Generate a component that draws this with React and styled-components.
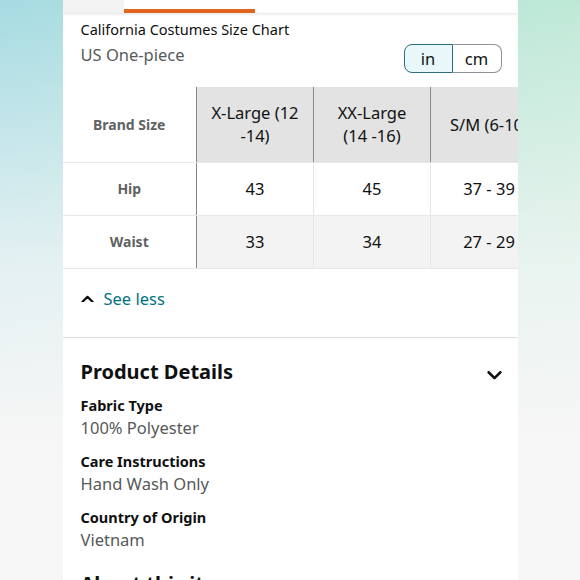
import React, { useState } from "react";
import styled, { createGlobalStyle } from "styled-components";

const GlobalStyle = createGlobalStyle`
  html, body {
    margin: 0;
    padding: 0;
    width: 580px;
    height: 580px;
    overflow: hidden;
  }
  body {
    font-family: "Noto Sans", "Open Sans", Arial, sans-serif;
    background:
      linear-gradient(to bottom, rgba(247,247,247,0) 0%, rgba(247,247,247,0.75) 45%, #f6f6f6 75%, #f7f7f7 100%),
      linear-gradient(to right, #a6dbe2 0%, #b3e2dd 50%, #bfe9d6 100%);
  }
`;

const Card = styled.div`
  width: 455px;
  height: 580px;
  margin: 0 auto;
  background: #fff;
  overflow: hidden;
`;

const Tabs = styled.div`
  display: flex;
  height: 13px;
  box-shadow: 0 1px 3px rgba(0, 0, 0, 0.12);
`;

const Tab = styled.div`
  width: ${({ w }) => w}px;
  background: ${({ grey }) => (grey ? "#f3f3f3" : "#fff")};
  border-bottom: ${({ active }) => (active ? "4px solid #e06620" : "none")};
  box-sizing: border-box;
  flex: ${({ w }) => (w ? "none" : "1")};
`;

const Header = styled.div`
  padding: 6px 16px 0 18px;
`;

const ChartTitle = styled.div`
  font-size: 14.5px;
  line-height: 20px;
  color: #0f1111;
`;

const SubRow = styled.div`
  display: flex;
  align-items: flex-start;
  justify-content: space-between;
`;

const SubTitle = styled.div`
  font-size: 16.5px;
  line-height: 24px;
  color: #565959;
  margin-top: 4px;
`;

const Toggle = styled.div`
  display: flex;
  margin-top: 5px;
  height: 29px;
`;

const ToggleBtn = styled.button`
  width: 49px;
  height: 29px;
  box-sizing: border-box;
  font-family: inherit;
  font-size: 16.5px;
  color: #0f1111;
  padding: 0;
  cursor: pointer;
  background: ${({ selected }) => (selected ? "#e8f8fa" : "#fff")};
  border: 1.5px solid ${({ selected }) => (selected ? "#2b6f7c" : "#8d9096")};
  border-radius: ${({ left }) => (left ? "8px 0 0 8px" : "0 8px 8px 0")};
  ${({ left }) => (left ? "" : "border-left: none;")}
`;

const TableWrap = styled.div`
  margin-top: 14px;
  overflow: hidden;
`;

const Table = styled.table`
  border-collapse: collapse;
  table-layout: fixed;
  width: 485px;
`;

const RowHead = styled.th`
  width: 134px;
  box-sizing: border-box;
  font-size: 14px;
  font-weight: 700;
  color: #5f6262;
  text-align: center;
  background: #fff;
  border-right: 1.5px solid #858585;
  border-bottom: 1px solid #e7e7e7;
  box-shadow: 5px 0 6px -3px rgba(0, 0, 0, 0.12);
  position: relative;
  z-index: 1;
  height: ${({ h }) => h}px;
  padding: 0;
`;

const ColHead = styled.th`
  width: 117px;
  box-sizing: border-box;
  height: 75px;
  background: #e3e3e3;
  font-weight: 400;
  font-size: 16.5px;
  line-height: 23px;
  color: #0f1111;
  text-align: center;
  white-space: nowrap;
  border-right: 1px solid #8a8a8a;
  border-bottom: 1px solid #e7e7e7;
  padding: 0 6px;
`;

const HeadLine = styled.span`
  display: block;
`;

const Cell = styled.td`
  height: 53px;
  box-sizing: border-box;
  text-align: center;
  font-size: 16.5px;
  color: #0f1111;
  white-space: nowrap;
  background: ${({ shade }) => (shade ? "#f3f3f3" : "#fff")};
  border-right: 1px solid #e7e7e7;
  border-bottom: 1px solid #e7e7e7;
  padding: 0;
`;

const SeeLess = styled.div`
  display: flex;
  align-items: center;
  gap: 10px;
  height: 69px;
  box-sizing: border-box;
  padding: 0 0 8px 18px;
  color: #007185;
  font-size: 16.5px;
  border-bottom: 1px solid #dddddd;
`;

const Details = styled.div`
  padding: 17px 16px 0 18px;
`;

const DetailsHead = styled.div`
  display: flex;
  justify-content: space-between;
  align-items: center;
  height: 34px;
`;

const DetailsTitle = styled.h2`
  margin: 0;
  font-size: 20px;
  line-height: 27px;
  font-weight: 700;
  color: #0f1111;
`;

const Item = styled.div`
  margin-top: ${({ first }) => (first ? "5px" : "10px")};
`;

const Label = styled.div`
  font-size: 14.5px;
  font-weight: 700;
  line-height: 22px;
  color: #0f1111;
`;

const Value = styled.div`
  font-size: 16.5px;
  line-height: 24px;
  color: #565959;
`;

const NextTitle = styled(DetailsTitle)`
  margin-top: 18px;
`;

const Chevron = ({ up, size = 14 }) => (
  <svg width={size} height={size * 0.6} viewBox="0 0 14 8.4" style={{ flex: "none", marginTop: up ? 0 : 8 }}>
    <polyline
      points={up ? "1.5,7.4 7,2 12.5,7.4" : "1.5,1.2 7,6.6 12.5,1.2"}
      fill="none"
      stroke="#0f1111"
      strokeWidth="2.4"
      strokeLinecap="round"
      strokeLinejoin="round"
    />
  </svg>
);

const sizes = [["X-Large (12", "-14)"], ["XX-Large", "(14 -16)"], ["S/M (6-10)"]];
const rows = [
  { name: "Hip", values: ["43", "45", "37 - 39"] },
  { name: "Waist", values: ["33", "34", "27 - 29"] },
];

const details = [
  { label: "Fabric Type", value: "100% Polyester" },
  { label: "Care Instructions", value: "Hand Wash Only" },
  { label: "Country of Origin", value: "Vietnam" },
];

const App = () => {
  const [unit, setUnit] = useState("in");
  return (
    <>
      <GlobalStyle />
      <Card>
        <Tabs>
          <Tab w={61} grey />
          <Tab w={131} active />
          <Tab />
        </Tabs>
        <Header>
          <ChartTitle>California Costumes Size Chart</ChartTitle>
          <SubRow>
            <SubTitle>US One-piece</SubTitle>
            <Toggle>
              <ToggleBtn left selected={unit === "in"} onClick={() => setUnit("in")}>
                in
              </ToggleBtn>
              <ToggleBtn selected={unit === "cm"} onClick={() => setUnit("cm")}>
                cm
              </ToggleBtn>
            </Toggle>
          </SubRow>
        </Header>
        <TableWrap>
          <Table>
            <tbody>
              <tr>
                <RowHead h={75}>Brand Size</RowHead>
                {sizes.map((lines) => (
                  <ColHead key={lines.join(" ")}>
                    {lines.map((l) => (
                      <HeadLine key={l}>{l}</HeadLine>
                    ))}
                  </ColHead>
                ))}
              </tr>
              {rows.map((r, idx) => (
                <tr key={r.name}>
                  <RowHead h={53}>{r.name}</RowHead>
                  {r.values.map((v, i) => (
                    <Cell key={i} shade={idx % 2 === 1}>
                      {v}
                    </Cell>
                  ))}
                </tr>
              ))}
            </tbody>
          </Table>
        </TableWrap>
        <SeeLess>
          <Chevron up size={13} />
          <span>See less</span>
        </SeeLess>
        <Details>
          <DetailsHead>
            <DetailsTitle>Product Details</DetailsTitle>
            <Chevron size={15} />
          </DetailsHead>
          {details.map((d, i) => (
            <Item key={d.label} first={i === 0}>
              <Label>{d.label}</Label>
              <Value>{d.value}</Value>
            </Item>
          ))}
          <NextTitle>About this item</NextTitle>
        </Details>
      </Card>
    </>
  );
};

export default App;
